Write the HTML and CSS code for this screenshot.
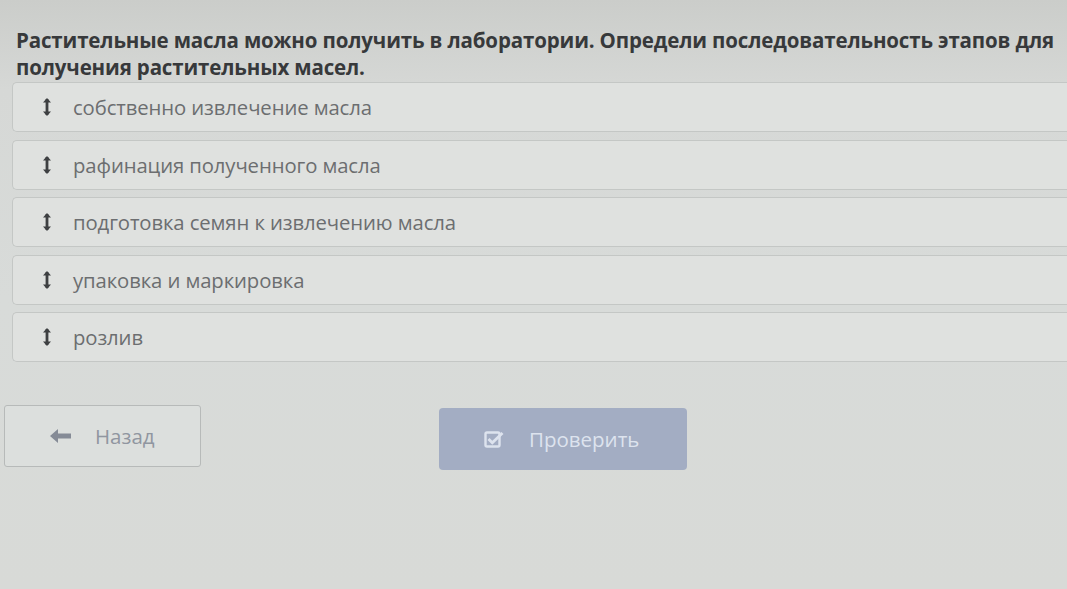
FILE: index.html
```html
<!DOCTYPE html>
<html lang="ru">
<head>
<meta charset="utf-8">
<link rel="stylesheet" href="styles.css">
</head>
<body>
<div class="page">
  <h1 class="question">Растительные масла можно получить в лаборатории. Определи последовательность этапов для получения растительных масел.</h1>
  <ul class="list">
    <li class="item"><span class="grip"><svg width="10" height="20" viewBox="0 0 10 20"><path d="M5 2v16" stroke="#3e4042" stroke-width="2.8"/><path d="M1 5.5L5 1l4 4.5zM1 14.5L5 19l4-4.5z" fill="#3e4042"/></svg></span><span class="label">собственно извлечение масла</span></li>
    <li class="item"><span class="grip"><svg width="10" height="20" viewBox="0 0 10 20"><path d="M5 2v16" stroke="#3e4042" stroke-width="2.8"/><path d="M1 5.5L5 1l4 4.5zM1 14.5L5 19l4-4.5z" fill="#3e4042"/></svg></span><span class="label">рафинация полученного масла</span></li>
    <li class="item"><span class="grip"><svg width="10" height="20" viewBox="0 0 10 20"><path d="M5 2v16" stroke="#3e4042" stroke-width="2.8"/><path d="M1 5.5L5 1l4 4.5zM1 14.5L5 19l4-4.5z" fill="#3e4042"/></svg></span><span class="label">подготовка семян к извлечению масла</span></li>
    <li class="item"><span class="grip"><svg width="10" height="20" viewBox="0 0 10 20"><path d="M5 2v16" stroke="#3e4042" stroke-width="2.8"/><path d="M1 5.5L5 1l4 4.5zM1 14.5L5 19l4-4.5z" fill="#3e4042"/></svg></span><span class="label">упаковка и маркировка</span></li>
    <li class="item"><span class="grip"><svg width="10" height="20" viewBox="0 0 10 20"><path d="M5 2v16" stroke="#3e4042" stroke-width="2.8"/><path d="M1 5.5L5 1l4 4.5zM1 14.5L5 19l4-4.5z" fill="#3e4042"/></svg></span><span class="label">розлив</span></li>
  </ul>
  <div class="actions">
    <button class="btn back"><svg width="24" height="16" viewBox="0 0 24 16"><path d="M1 8L9 1v4.5h13v5H9V15z" fill="#858b96"/></svg><span>Назад</span></button>
    <button class="btn check"><svg width="20" height="19" viewBox="0 0 20 19"><rect x="1.5" y="2.5" width="14" height="14" rx="1.5" fill="none" stroke="#dde3ee" stroke-width="2.4"/><path d="M4.5 9l3.8 3.8L18.5 3" fill="none" stroke="#dde3ee" stroke-width="2.8"/></svg><span>Проверить</span></button>
  </div>
</div>
</body>
</html>
```
FILE: styles.css
```css
html, body {
  margin: 0;
  padding: 0;
  background: #d8dbd9;
  overflow: hidden;
}
.page {
  width: 1067px;
  height: 589px;
  font-family: "Open Sans", "Noto Sans", sans-serif;
  padding: 27px 0 0 16px;
  box-sizing: border-box;
  background: linear-gradient(to bottom, #cbcdca 0px, #d6d8d6 90px, #d8dbd9 300px, #d8dad7 589px);
}
.question {
  margin: 0;
  font-size: 20.5px;
  line-height: 27px;
  font-weight: 700;
  color: #37393b;
  width: 1060px;
  letter-spacing: -0.15px;
}
.list {
  list-style: none;
  margin: 1px 0 0 -4px;
  padding: 0;
  display: flex;
  flex-direction: column;
  gap: 7.5px;
}
.item {
  height: 50px;
  box-sizing: border-box;
  border: 1px solid #c4c7c5;
  border-right: none;
  border-radius: 5px 0 0 5px;
  background: #dfe1df;
  display: flex;
  align-items: center;
  padding-left: 29px;
  margin-right: -4px;
}
.grip {
  display: flex;
  width: 10px;
  margin-right: 21px;
}
.label {
  font-size: 20.3px;
  color: #6c6e70;
  letter-spacing: -0.1px;
}
.actions {
  display: flex;
  align-items: flex-start;
  margin: 43px 0 0 -12px;
}
.btn {
  font-family: "Open Sans", "Noto Sans", sans-serif;
  font-size: 20.5px;
  display: flex;
  align-items: center;
  border-radius: 3px;
  cursor: pointer;
}
.back {
  width: 197px;
  height: 62px;
  background: #dcdfdd;
  border: 1.5px solid #b7bab9;
  color: #9096a0;
  padding-left: 44px;
  gap: 22px;
}
.check {
  margin: 3px 0 0 238px;
  width: 248px;
  height: 62px;
  background: #a3adc3;
  border: none;
  color: #dde3ee;
  padding-left: 45px;
  gap: 25px;
  border-radius: 4px;
}
```
